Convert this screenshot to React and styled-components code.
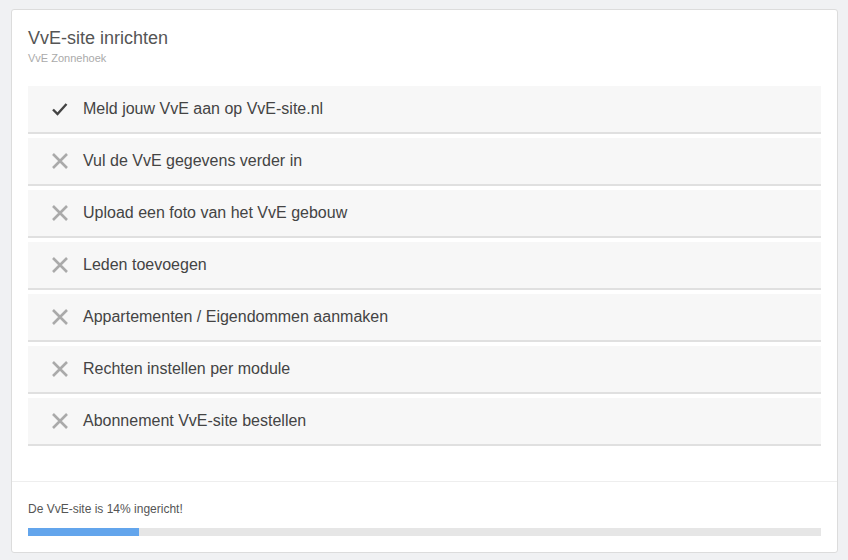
import styled, { createGlobalStyle } from "styled-components"

const GlobalStyle = createGlobalStyle`
  body {
    margin: 0;
    background: #f0f1f3;
    font-family: "Liberation Sans", Arial, sans-serif;
  }
`

const Page = styled.div`
  padding: 9px 10px 7px 11px;
`

const Card = styled.div`
  background: #fff;
  border: 1px solid #dcdcdc;
  border-radius: 3px;
  height: 542px;
  display: flex;
  flex-direction: column;
`

const Header = styled.div`
  padding: 17px 16px 0 16px;
`

const Title = styled.h2`
  margin: 0;
  font-size: 18px;
  line-height: 22px;
  font-weight: normal;
  color: #555;
`

const Subtitle = styled.div`
  margin-top: 2px;
  font-size: 11px;
  line-height: 14px;
  color: #aaa;
`

const List = styled.ul`
  list-style: none;
  margin: 0;
  padding: 21px 16px 35px 16px;
  display: flex;
  flex-direction: column;
  gap: 4px;
`

const Item = styled.li`
  height: 46px;
  display: flex;
  align-items: center;
  gap: 15px;
  padding-left: 24px;
  background: #f7f7f7;
  border-bottom: 2px solid #e0e0e0;
  font-size: 16px;
  color: #444;
`

const Icon = styled.svg`
  width: 16px;
  height: 16px;
  flex-shrink: 0;
`

const Footer = styled.div`
  border-top: 1px solid #eeeeee;
  padding: 20px 16px 16px 16px;
`

const FooterText = styled.div`
  font-size: 12px;
  line-height: 15px;
  color: #555;
`

const Bar = styled.div`
  margin-top: 11px;
  height: 8px;
  background: #e6e6e6;
`

const Fill = styled.div`
  height: 100%;
  background: #63a5ec;
`

const steps = [
  { label: "Meld jouw VvE aan op VvE-site.nl", done: true },
  { label: "Vul de VvE gegevens verder in" },
  { label: "Upload een foto van het VvE gebouw" },
  { label: "Leden toevoegen" },
  { label: "Appartementen / Eigendommen aanmaken" },
  { label: "Rechten instellen per module" },
  { label: "Abonnement VvE-site bestellen" },
]

const Check = () => (
  <Icon viewBox="0 0 16 16">
    <polyline points="1,8.5 5.5,13 14.5,3" fill="none" stroke="#444" strokeWidth="2.4" />
  </Icon>
)

const Cross = () => (
  <Icon viewBox="0 0 16 16">
    <path d="M1 1 L15 15 M15 1 L1 15" stroke="#aaa" strokeWidth="2.6" />
  </Icon>
)

const App = () => {
  const done = steps.filter((s) => s.done).length
  const pct = Math.floor((done / steps.length) * 100)
  return (
    <Page>
      <GlobalStyle />
      <Card>
        <Header>
          <Title>VvE-site inrichten</Title>
          <Subtitle>VvE Zonnehoek</Subtitle>
        </Header>
        <List>
          {steps.map((s) => (
            <Item key={s.label}>
              {s.done ? <Check /> : <Cross />}
              {s.label}
            </Item>
          ))}
        </List>
        <Footer>
          <FooterText>De VvE-site is {pct}% ingericht!</FooterText>
          <Bar>
            <Fill style={{ width: pct + "%" }} />
          </Bar>
        </Footer>
      </Card>
    </Page>
  )
}

export default App
